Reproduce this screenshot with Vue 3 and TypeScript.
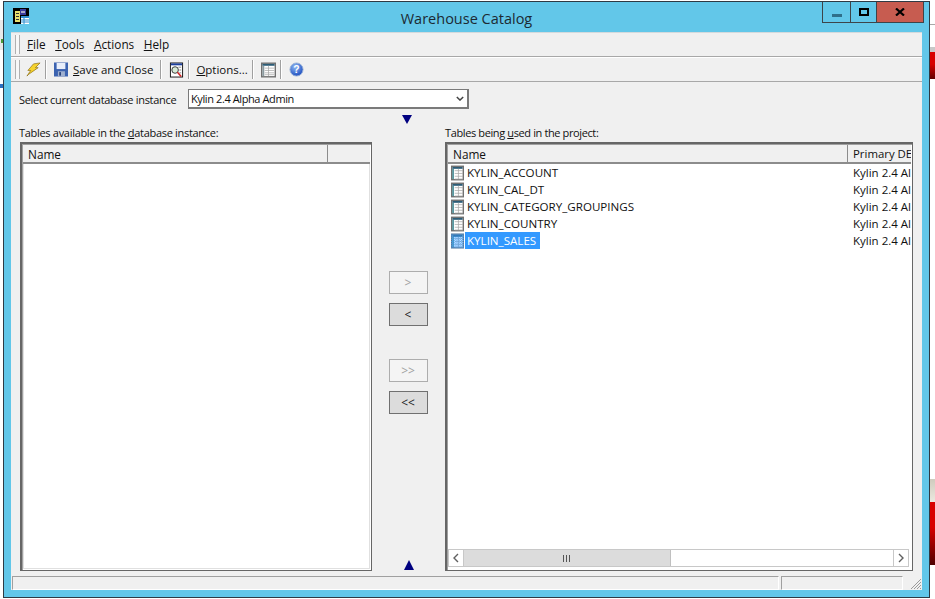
<script setup lang="ts">
interface TableRow {
  name: string
  db: string
  selected?: boolean
}

const usedTables: TableRow[] = [
  { name: 'KYLIN_ACCOUNT', db: 'Kylin 2.4 Al' },
  { name: 'KYLIN_CAL_DT', db: 'Kylin 2.4 Al' },
  { name: 'KYLIN_CATEGORY_GROUPINGS', db: 'Kylin 2.4 Al' },
  { name: 'KYLIN_COUNTRY', db: 'Kylin 2.4 Al' },
  { name: 'KYLIN_SALES', db: 'Kylin 2.4 Al', selected: true },
]

const gridLines = [3, 6, 9, 12]
</script>

<template>
  <div class="desktop">
    <!-- bits of the windows behind -->
    <div class="behind behind--left"></div>
    <div class="behind behind--green"></div>
    <div class="behind behind--blue"></div>
    <div class="behind behind--line"></div>
    <div class="behind behind--strip"></div>
    <div class="behind behind--red-top"></div>
    <div class="behind behind--beige"></div>
    <div class="behind behind--red-bottom"></div>

    <div class="window">
      <header class="titlebar">
        <svg class="app-icon" viewBox="0 0 16 16" width="16" height="16">
          <rect width="16" height="16" fill="#000" />
          <rect x="2" y="3" width="5" height="11" fill="#e8e070" />
          <rect x="3" y="5" width="3" height="1" fill="#333" />
          <rect x="3" y="8" width="3" height="1" fill="#333" />
          <rect x="3" y="11" width="3" height="1" fill="#333" />
          <rect x="7" y="1" width="6" height="6" fill="#3a3a9c" />
          <rect x="8" y="3" width="4" height="2" fill="#a9a9c9" />
          <rect x="8" y="8" width="8" height="8" fill="#fff" />
          <rect x="8" y="8" width="8" height="2" fill="#2f8fd0" />
          <path d="M11 10v6M8 12h8M8 14h8" stroke="#2f8fd0" stroke-width="1" />
        </svg>
        <span class="title">Warehouse Catalog</span>
        <div class="caption-buttons">
          <span class="caption caption--min"><i></i></span>
          <span class="caption caption--max"><i></i></span>
          <span class="caption caption--close">
            <svg viewBox="0 0 10 8" width="10" height="8">
              <path d="M1 0.5 L9 7.5 M9 0.5 L1 7.5" stroke="#000" stroke-width="2.2" fill="none" />
            </svg>
          </span>
        </div>
      </header>

      <div class="client">
        <nav class="menubar">
          <span class="grip"></span>
          <span class="menu"><u>F</u>ile</span>
          <span class="menu"><u>T</u>ools</span>
          <span class="menu"><u>A</u>ctions</span>
          <span class="menu"><u>H</u>elp</span>
        </nav>

        <div class="toolbar">
          <span class="grip"></span>
          <svg class="tool tool--bolt" viewBox="0 0 16 16" width="15" height="15">
            <path d="M8 2 L15 1 L10 6 L13 6 L3 13 L1 15 L5 9 L2 9 Z" fill="#f6d32d" stroke="#8a6a10" stroke-width="0.7" />
          </svg>
          <span class="sep"></span>
          <svg class="tool" viewBox="0 0 16 16" width="14" height="15">
            <rect x="0" y="0" width="16" height="16" fill="#3c63b0" />
            <rect x="3" y="0.5" width="10" height="7" fill="#e8eefa" />
            <rect x="4.5" y="10" width="8" height="6" fill="#9fb0cf" />
            <rect x="6" y="11" width="2" height="4" fill="#27417c" />
          </svg>
          <span class="tool-label"><u>S</u>ave and Close</span>
          <span class="sep"></span>
          <svg class="tool" viewBox="0 0 16 16" width="15" height="16">
            <rect x="1.5" y="0.5" width="13" height="15" fill="#fff" stroke="#111" />
            <rect x="2" y="1" width="12" height="2" fill="#1b3f9e" />
            <path d="M10 5h3M11 8h2M11 11h2" stroke="#888" />
            <circle cx="6.5" cy="8" r="3.5" fill="#d8ecd8" stroke="#333" />
            <path d="M9 10.5 L13 15" stroke="#d02020" stroke-width="1.6" />
          </svg>
          <span class="sep"></span>
          <span class="tool-label tool-label--options"><u>O</u>ptions...</span>
          <span class="sep"></span>
          <svg class="tool" viewBox="0 0 16 16" width="15" height="16">
            <rect x="0.75" y="0.75" width="14.5" height="14.5" fill="#fff" stroke="#707070" stroke-width="1.5" />
            <rect x="1.5" y="1.5" width="13" height="2" fill="#2c5d78" />
            <rect x="1.5" y="3.5" width="2" height="11" fill="#8a9aa0" />
            <path d="M4 6h10M4 8.5h10M4 11h10M4 13h10M8 3.5v11" stroke="#a8a8a8" stroke-width="0.8" />
          </svg>
          <span class="sep"></span>
          <svg class="tool" viewBox="0 0 16 16" width="15" height="15">
            <defs>
              <radialGradient id="helpFill" cx="40%" cy="30%" r="70%">
                <stop offset="0%" stop-color="#8fb8f4" />
                <stop offset="100%" stop-color="#1f4fc0" />
              </radialGradient>
            </defs>
            <circle cx="8" cy="8" r="7" fill="url(#helpFill)" stroke="#9db4d8" />
            <text x="8" y="12" text-anchor="middle" font-size="11" font-weight="700" font-family="'Liberation Sans', sans-serif" fill="#fff">?</text>
          </svg>
        </div>

        <div class="instance-row">
          <label class="instance-label">Select current database instance</label>
          <div class="instance-select">
            <span>Kylin 2.4 Alpha Admin</span>
            <svg viewBox="0 0 10 6" width="8" height="5">
              <path d="M1 1 L5 5 L9 1" stroke="#444" stroke-width="1.8" fill="none" />
            </svg>
          </div>
        </div>

        <main class="catalog">
          <section class="pane">
            <div class="pane-title">Tables available in the <u>d</u>atabase instance:</div>
            <div class="list">
              <div class="list-head">
                <span class="col col--left-name">Name</span>
                <span class="col col--left-rest"></span>
              </div>
              <div class="list-body"></div>
            </div>
          </section>

          <section class="mover">
            <span class="tri tri--down"></span>
            <div class="mover-buttons">
              <button class="move" disabled type="button">&gt;</button>
              <button class="move" type="button">&lt;</button>
              <button class="move move--far" disabled type="button">&gt;&gt;</button>
              <button class="move" type="button">&lt;&lt;</button>
            </div>
            <span class="tri tri--up"></span>
          </section>

          <section class="pane">
            <div class="pane-title pane-title--right">Tables being <u>u</u>sed in the project:</div>
            <div class="list">
              <div class="list-head">
                <span class="col col--right-name">Name</span>
                <span class="col col--right-db">Primary DE</span>
              </div>
              <div class="list-body list-body--rows">
                <div class="rows">
                  <div v-for="row in usedTables" :key="row.name" class="row">
                    <span class="row-main">
                      <svg class="row-icon" viewBox="0 0 14 16" width="13" height="16">
                        <defs>
                          <pattern id="dither" width="2" height="2" patternUnits="userSpaceOnUse">
                            <rect width="1" height="1" fill="#3399ff" />
                            <rect x="1" y="1" width="1" height="1" fill="#3399ff" />
                          </pattern>
                        </defs>
                        <rect x="0.75" y="0.75" width="12.5" height="14.5" fill="#fff" stroke="#707070" stroke-width="1.5" />
                        <rect x="1.5" y="1.5" width="11" height="2" fill="#2c5d78" />
                        <rect x="1.5" y="3.5" width="1.5" height="11" fill="#2c7d88" />
                        <path
                          v-for="y in gridLines"
                          :key="y"
                          :d="`M4 ${y + 2.5}h9`"
                          stroke="#a8a8a8"
                          stroke-width="0.8"
                        />
                        <path d="M8 3.5v11" stroke="#a8a8a8" stroke-width="0.8" />
                        <rect v-if="row.selected" width="14" height="16" fill="url(#dither)" />
                      </svg>
                      <span class="row-name" :class="{ 'row-name--selected': row.selected }">{{ row.name }}</span>
                    </span>
                    <span class="row-db">{{ row.db }}</span>
                  </div>
                </div>
                <div class="hscroll">
                  <span class="hscroll-btn">
                    <svg viewBox="0 0 6 10" width="6" height="10"><path d="M5 1 L1 5 L5 9" stroke="#606060" stroke-width="1.4" fill="none" /></svg>
                  </span>
                  <span class="hscroll-track">
                    <span class="hscroll-thumb"><i></i><i></i><i></i></span>
                  </span>
                  <span class="hscroll-btn">
                    <svg viewBox="0 0 6 10" width="6" height="10"><path d="M1 1 L5 5 L1 9" stroke="#606060" stroke-width="1.4" fill="none" /></svg>
                  </span>
                </div>
              </div>
            </div>
          </section>
        </main>

        <footer class="statusbar">
          <span class="status status--wide"></span>
          <span class="status status--small"></span>
          <svg class="size-grip" viewBox="0 0 12 12" width="12" height="12">
            <path d="M11 1 L1 11 M11 4 L4 11 M11 7 L7 11 M11 10 L10 11" stroke="#9a9a9a" stroke-width="1" />
          </svg>
        </footer>
      </div>
    </div>
  </div>
</template>

<style>
html,
body {
  margin: 0;
  background: #fff;
  overflow: hidden;
}
</style>

<style scoped>
.desktop {
  position: relative;
  width: 935px;
  height: 599px;
  overflow: hidden;
  background: #fff;
  font-family: "Open Sans", "Liberation Sans", sans-serif;
  font-size: 11px;
  letter-spacing: -0.3px;
  color: #111;
}

.behind {
  position: absolute;
}

.behind--left {
  left: 0;
  top: 20px;
  width: 3px;
  height: 30px;
  background: #e8e8e8;
}

.behind--green {
  left: 1px;
  top: 39px;
  width: 2px;
  height: 4px;
  background: #4a9a3a;
}

.behind--blue {
  left: 0;
  top: 84px;
  width: 3px;
  height: 4px;
  background: #2a6fc0;
}

.behind--line {
  left: 930px;
  top: 24px;
  width: 5px;
  height: 1px;
  background: #a8a8a8;
}

.behind--strip {
  left: 930px;
  top: 47px;
  width: 5px;
  height: 5px;
  background: #c8c8c8;
}

.behind--red-top {
  left: 930px;
  top: 52px;
  width: 5px;
  height: 27px;
  background: linear-gradient(#d80000 45%, #600000);
}

.behind--beige {
  left: 930px;
  top: 479px;
  width: 5px;
  height: 23px;
  background: linear-gradient(#cfcbbd, #ece9e0);
}

.behind--red-bottom {
  left: 930px;
  top: 502px;
  width: 5px;
  height: 63px;
  background: linear-gradient(#d80000 40%, #500000);
}

.window {
  position: absolute;
  left: 3px;
  top: 1px;
  width: 927px;
  height: 597px;
  box-sizing: border-box;
  border: 1px solid #2e3a44;
  background: #62c7e9;
  display: flex;
  flex-direction: column;
  padding: 0 7px 7px;
}

.titlebar {
  position: relative;
  height: 30px;
  flex: none;
  display: flex;
  align-items: center;
  justify-content: center;
}

.app-icon {
  position: absolute;
  left: 2px;
  top: 6px;
}

.title {
  font-size: 14.5px;
  letter-spacing: 0;
  color: #1c2a33;
  margin-top: 2px;
}

.caption-buttons {
  position: absolute;
  right: -2px;
  top: 0;
  height: 20px;
  display: flex;
  border: 1px solid #3d4449;
  border-top: 0;
}

.caption {
  display: flex;
  align-items: center;
  justify-content: center;
  height: 20px;
  box-sizing: border-box;
}

.caption--min {
  width: 28px;
  border-right: 1px solid #3d4449;
}

.caption--min i {
  display: block;
  width: 10px;
  height: 3px;
  margin-top: 6px;
  background: #2f6f8a;
}

.caption--max {
  width: 26px;
  border-right: 1px solid #3d4449;
}

.caption--max i {
  display: block;
  width: 6px;
  height: 4px;
  border: 2px solid #000;
  margin-top: -1px;
}

.caption--close {
  width: 46px;
  background: #c75c50;
}

.client {
  flex: 1;
  min-height: 0;
  background: #f0f0f0;
  display: flex;
  flex-direction: column;
}

.menubar,
.toolbar {
  display: flex;
  align-items: center;
  flex: none;
  height: 23px;
  border-top: 1px solid #fff;
  border-bottom: 1px solid #a8a8a8;
  letter-spacing: 0;
}

.menubar {
  border-top-color: #d4dadd;
}

.grip {
  width: 3px;
  height: 19px;
  margin-left: 4px;
  border-left: 1px solid #b0b0b0;
  border-right: 1px solid #b0b0b0;
  background: #f8f8f8;
  flex: none;
}

.menu {
  margin: 0 0 2px 9.5px;
  font-size: 11.8px;
}

.grip + .menu {
  margin-left: 7px;
}

.tool {
  flex: none;
}

.tool--bolt {
  margin-left: 6px;
}

.sep {
  width: 1px;
  height: 19px;
  background: #a0a0a0;
  border-right: 1px solid #fff;
  margin-left: 4px;
  margin-right: 7px;
  flex: none;
}

.tool-label {
  font-size: 11.5px;
  margin-left: 5px;
  margin-right: 3px;
}

.tool-label--options {
  margin-left: -1px;
  margin-right: 0;
}

.instance-row {
  display: flex;
  align-items: center;
  flex: none;
  padding: 7px 0 0 8px;
  height: 20px;
}

.instance-label {
  width: 169px;
  flex: none;
  white-space: nowrap;
}

.instance-select {
  width: 281px;
  height: 20px;
  box-sizing: border-box;
  border: 1px solid #7a7a7a;
  border-width: 1px 2px 2px 1px;
  background: #fff;
  display: flex;
  align-items: center;
  justify-content: space-between;
  padding: 0 3px 0 2px;
  letter-spacing: -0.4px;
}

.catalog {
  flex: 1;
  min-height: 0;
  display: grid;
  grid-template-columns: 352px 73px 468px;
  padding: 0 0 5px 9px;
}

.pane {
  display: flex;
  flex-direction: column;
  min-height: 0;
}

.pane-title {
  height: 17px;
  margin: 16px 0 0 -1px;
  flex: none;
  white-space: nowrap;
}

.pane-title--right {
  margin-left: 0;
  letter-spacing: -0.38px;
}

.list {
  flex: 1;
  min-height: 0;
  border: solid #666;
  border-width: 2px 1px 1px 2px;
  padding: 1px;
  box-shadow: inset 1px 1px 0 #a0a0a0, inset -1px -1px 0 #fff;
  display: flex;
  flex-direction: column;
  background: #f0f0f0;
}

.list-head {
  display: flex;
  height: 19px;
  flex: none;
  border-bottom: 2px solid #8c8c8c;
  box-sizing: border-box;
}

.col {
  display: flex;
  align-items: center;
  box-sizing: border-box;
  padding-left: 5px;
  font-size: 11.8px;
  letter-spacing: 0;
  white-space: nowrap;
  overflow: hidden;
}

.col--left-name {
  width: 305px;
  border-right: 1px solid #8c8c8c;
}

.col--left-rest {
  flex: 1;
}

.col--right-name {
  width: 400px;
  border-right: 1px solid #8c8c8c;
}

.col--right-db {
  flex: 1;
  font-size: 11.4px;
}

.list-body {
  flex: 1;
  min-height: 0;
  background: #fff;
  border: 1px solid #e0e0e0;
  border-top: 0;
  box-sizing: border-box;
}

.list-body--rows {
  display: flex;
  flex-direction: column;
  border: 0;
}

.rows {
  flex: 1;
  min-height: 0;
}

.row {
  display: flex;
  height: 17px;
  align-items: center;
  overflow: hidden;
  letter-spacing: 0;
  font-size: 11.6px;
}

.row-main {
  width: 405px;
  flex: none;
  display: flex;
  align-items: center;
}

.row-icon {
  margin-left: 3px;
  flex: none;
}

.row-name {
  margin-left: 1px;
  padding: 0 4px 0 2px;
  line-height: 17px;
  white-space: nowrap;
}

.row-name--selected {
  background: #3399ff;
  color: #fff;
}

.row-db {
  white-space: nowrap;
  font-size: 11.5px;
}

.mover {
  position: relative;
  display: flex;
  justify-content: center;
}

.mover-buttons {
  display: flex;
  flex-direction: column;
  align-items: center;
  padding-top: 162px;
  margin-left: -1px;
}

.tri {
  position: absolute;
  width: 0;
  height: 0;
  border-left: 5px solid transparent;
  border-right: 5px solid transparent;
}

.tri--down {
  left: 30px;
  top: 6px;
  border-top: 9px solid #000080;
}

.tri--up {
  left: 32px;
  bottom: 1px;
  border-bottom: 10px solid #000080;
}

.move {
  width: 39px;
  height: 23px;
  margin: 0 0 9px;
  padding: 0;
  font-family: inherit;
  font-size: 12px;
  letter-spacing: 0;
  background: #dcdcdc;
  border: 1px solid #707070;
  color: #222;
  box-sizing: border-box;
}

.move:disabled {
  background: #f4f4f4;
  border-color: #adadad;
  color: #a0a0a0;
}

.move--far {
  margin-top: 24px;
}

.hscroll {
  flex: none;
  height: 18px;
  box-sizing: border-box;
  display: flex;
  align-items: stretch;
  background: #fff;
  border-top: 1px solid #c8c8c8;
  border-bottom: 1px solid #c8c8c8;
  margin: 0 2px 2px 0;
}

.hscroll-btn {
  width: 16px;
  box-sizing: border-box;
  flex: none;
  display: flex;
  align-items: center;
  justify-content: center;
  border-left: 1px solid #c8c8c8;
  border-right: 1px solid #c8c8c8;
}

.hscroll-track {
  flex: 1;
  display: flex;
}

.hscroll-thumb {
  width: 207px;
  box-sizing: border-box;
  background: #dcdcdc;
  border-right: 1px solid #c0c0c0;
  display: flex;
  align-items: center;
  justify-content: center;
  gap: 1px;
}

.hscroll-thumb i {
  display: block;
  width: 1px;
  height: 7px;
  margin: 0 1px 0 0;
  background: #555;
}

.statusbar {
  flex: none;
  height: 14px;
  display: flex;
  align-items: stretch;
  position: relative;
  padding-left: 1px;
}

.status {
  box-sizing: border-box;
  border-top: 1px solid #a0a0a0;
  border-left: 1px solid #a0a0a0;
  border-bottom: 1px solid #fff;
  border-right: 1px solid #fff;
}

.status--wide {
  width: 767px;
}

.status--small {
  width: 122px;
  margin-left: 2px;
}

.size-grip {
  position: absolute;
  right: 0;
  bottom: 0;
}
</style>
